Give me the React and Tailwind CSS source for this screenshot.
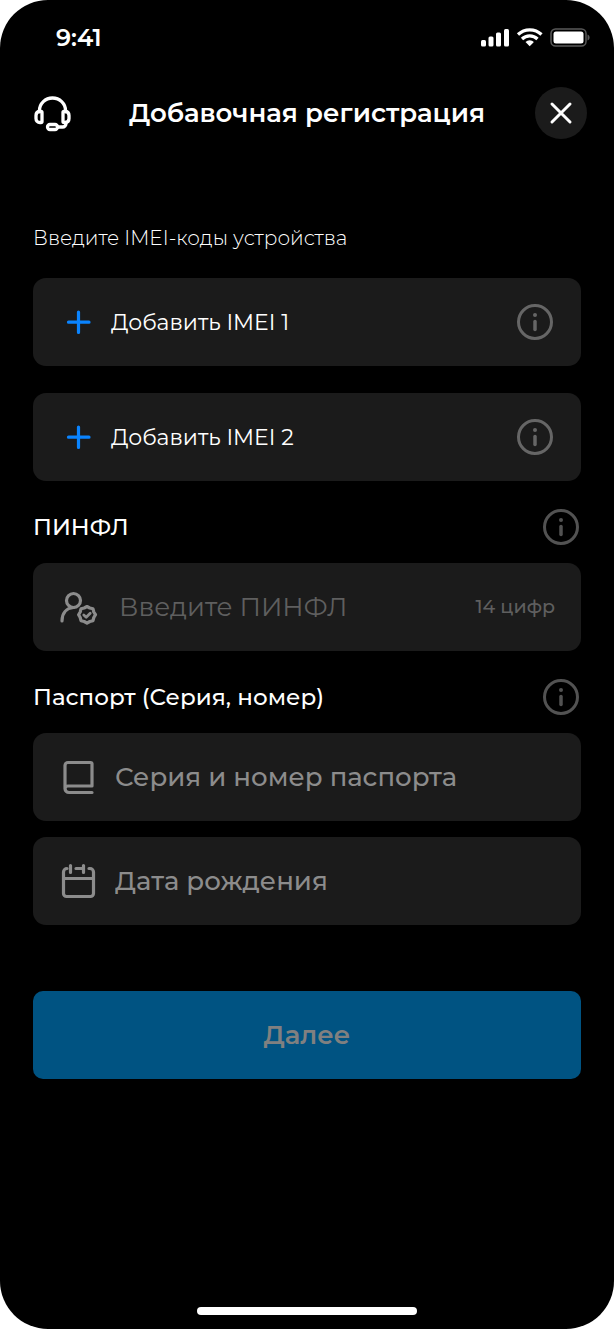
import React, { useState } from 'react';

const HeadsetIcon = () => (
  <svg viewBox="0 0 40 40" className="size-10" fill="none" stroke="currentColor" strokeWidth="3.3" strokeLinecap="round" strokeLinejoin="round">
    <path d="M6.500 18.500V17.500a13 12.500 0 0 1 26 0v1" />
    <path d="M7 18.500h1a1 1 0 0 1 1 1v9a1 1 0 0 1-1 1h-1c-2.500 0-4-1.500-4-4v-3c0-2.500 1.500-4 4-4Z" />
    <path d="M32 18.500h-1a1 1 0 0 0-1 1v9a1 1 0 0 0 1 1h1c2.500 0 4-1.500 4-4v-3c0-2.500-1.500-4-4-4Z" />
    <path d="M33 29.500v1a3.500 3.500 0 0 1-3.500 3.500h-5" />
    <rect x="14.500" y="31.500" width="10" height="5" rx="2.500" />
  </svg>
);

const CloseIcon = () => (
  <svg viewBox="0 0 24 24" className="size-6" fill="none" stroke="currentColor" strokeWidth="3" strokeLinecap="round">
    <path d="M3 3l18 18M21 3 3 21" />
  </svg>
);

const PlusIcon = () => (
  <svg viewBox="0 0 40 40" className="size-10 shrink-0 text-[#0a84ff]" fill="none" stroke="currentColor" strokeWidth="3.2" strokeLinecap="round">
    <path d="M19.500 10v20.500M9.500 20.200h20.500" />
  </svg>
);

const InfoIcon = () => (
  <svg viewBox="0 0 40 40" className="size-10" fill="none" stroke="currentColor" strokeWidth="3" strokeLinecap="round">
    <circle cx="20" cy="20" r="16.500" />
    <path d="M20 19.500v8" strokeWidth="3.500" />
    <circle cx="20" cy="13" r="2" fill="currentColor" stroke="none" />
  </svg>
);

const UserCheckIcon = () => (
  <svg viewBox="0 0 40 40" className="size-10 shrink-0 text-[#8c8c8c]" fill="none" stroke="currentColor" strokeWidth="3.2" strokeLinecap="round" strokeLinejoin="round">
    <circle cx="14.500" cy="13.500" r="7" />
    <path d="M3 34C3 26 7.500 21 14.500 20.500" />
    <path d="M28 19.500l2.800 1.500 3.200.8.800 3.200 1.700 2.700-1.700 2.800-.8 3.200-3.200.8-2.800 1.600-2.800-1.600-3.200-.8-.8-3.200-1.600-2.800 1.600-2.700.8-3.200 3.200-.8Z" />
    <path d="M24.800 28l2.400 2.200 4-4" strokeWidth="2.800" />
  </svg>
);

const BookIcon = () => (
  <svg viewBox="0 0 40 40" className="size-10 shrink-0 text-[#8c8c8c]" fill="none" stroke="currentColor" strokeWidth="3.2" strokeLinecap="round" strokeLinejoin="round">
    <path d="M33 35.500H10a4 4 0 0 1-4-4V8.500a3 3 0 0 1 3-3h22.500a1.500 1.500 0 0 1 1.500 1.500v22H9a3 3 0 0 0-3 3" />
  </svg>
);

const CalendarIcon = () => (
  <svg viewBox="0 0 40 40" className="size-10 shrink-0 text-[#8c8c8c]" fill="none" stroke="currentColor" strokeWidth="3.2" strokeLinecap="round" strokeLinejoin="round">
    <path d="M8 7.500A3.500 3.500 0 0 0 4.500 11v21.500a3 3 0 0 0 3 3h24a3 3 0 0 0 3-3V11a3.500 3.500 0 0 0-3.500-3.500h-1" />
    <path d="M4.500 17.500h30M17 7.500h7M11.500 4.500v7M24.500 4.500v7" />
  </svg>
);

const StatusIcons = () => (
  <svg viewBox="0 0 110 20" className="h-5 w-[110px]" fill="white">
    <rect x="1" y="12" width="5" height="6.500" rx="1.500" />
    <rect x="8.500" y="8.500" width="5" height="10" rx="1.500" />
    <rect x="16" y="4.500" width="5" height="14" rx="1.500" />
    <rect x="24" y="1" width="5" height="17.500" rx="1.500" />
    <g fill="none" stroke="white" strokeWidth="3.200">
      <path d="M38 6.500a17 17 0 0 1 23.500 0" />
      <path d="M42 11a11 11 0 0 1 15.500 0" />
    </g>
    <path d="M49.700 18.200l-4.200-4.200a6.200 6.200 0 0 1 8.400 0Z" />
    <rect x="71" y="1" width="35" height="17" rx="4.500" fill="none" stroke="#595959" strokeWidth="1.500" />
    <rect x="73.500" y="3.500" width="30" height="12" rx="2.500" />
    <path d="M107.500 6.500c2.800 1 2.800 5 0 6Z" fill="#595959" />
  </svg>
);

const boxClass = "flex h-[88px] items-center rounded-[13px] bg-[#1b1b1b] px-[26px]";

function ImeiRow({ number, onAdd }) {
  return (
    <div className={boxClass}>
      <button type="button" onClick={onAdd} className="flex flex-1 items-center gap-3 text-left text-[22px] text-white">
        <PlusIcon />
        Добавить IMEI {number}
      </button>
      <button type="button" aria-label={`Об IMEI ${number}`} className="text-[#666666]">
        <InfoIcon />
      </button>
    </div>
  );
}

function FieldLabel({ htmlFor, children }) {
  return (
    <div className="flex items-center justify-between">
      <label htmlFor={htmlFor} className="text-[23px] font-medium text-white">{children}</label>
      <button type="button" aria-label="Подробнее" className="text-[#525252]">
        <InfoIcon />
      </button>
    </div>
  );
}

function App() {
  const [form, setForm] = useState({ pinfl: '', passport: '', birthday: '' });

  const handleChange = (e) => {
    setForm({ ...form, [e.target.name]: e.target.value });
  };

  return (
    <div className="min-h-screen bg-white font-['Montserrat','Inter',sans-serif]">
      <div className="flex min-h-screen flex-col rounded-[48px] bg-black">
        <div className="flex h-[76px] items-center justify-between pr-6 pl-14">
          <span className="text-[24px] font-semibold text-white">9:41</span>
          <StatusIcons />
        </div>

        <header className="grid h-[74px] grid-cols-[52px_1fr_52px] items-center px-[27px]">
          <button type="button" aria-label="Поддержка" className="flex justify-center text-white">
            <HeadsetIcon />
          </button>
          <h1 className="text-center text-[26px] font-semibold text-white">Добавочная регистрация</h1>
          <button type="button" aria-label="Закрыть" className="flex size-[52px] items-center justify-center rounded-full bg-[#1b1b1b] text-white">
            <CloseIcon />
          </button>
        </header>

        <form onSubmit={(e) => e.preventDefault()} className="flex flex-col px-[33px] pt-[74px]">
          <p className="text-[20px] leading-7 font-light text-white">Введите IMEI-коды устройства</p>

          <div className="mt-[26px] flex flex-col gap-[27px]">
            <ImeiRow number={1} />
            <ImeiRow number={2} />
          </div>

          <div className="mt-[26px] flex flex-col gap-4">
            <FieldLabel htmlFor="pinfl">ПИНФЛ</FieldLabel>
            <div className={boxClass}>
              <UserCheckIcon />
              <input
                id="pinfl"
                name="pinfl"
                value={form.pinfl}
                onChange={handleChange}
                maxLength={14}
                placeholder="Введите ПИНФЛ"
                className="ml-5 min-w-0 flex-1 bg-transparent text-[26px] text-white outline-none placeholder:text-[#5f5f5f]"
              />
              <span className="text-[19px] font-medium text-[#5f5f5f]">14 цифр</span>
            </div>
          </div>

          <div className="mt-[26px] flex flex-col gap-4">
            <FieldLabel htmlFor="passport">Паспорт (Серия, номер)</FieldLabel>
            <div className={boxClass}>
              <BookIcon />
              <input
                id="passport"
                name="passport"
                value={form.passport}
                onChange={handleChange}
                placeholder="Серия и номер паспорта"
                className="ml-4 min-w-0 flex-1 bg-transparent text-[26px] font-medium text-white outline-none placeholder:text-[#8c8c8c]"
              />
            </div>
            <div className={boxClass}>
              <CalendarIcon />
              <input
                name="birthday"
                aria-label="Дата рождения"
                value={form.birthday}
                onChange={handleChange}
                placeholder="Дата рождения"
                className="ml-4 min-w-0 flex-1 bg-transparent text-[26px] font-medium text-white outline-none placeholder:text-[#8c8c8c]"
              />
            </div>
          </div>

          <button type="submit" className="mt-[66px] h-[88px] rounded-[10px] bg-[#005382] text-[26px] font-semibold text-[#808080]">
            Далее
          </button>
        </form>

        <div className="mx-auto mt-auto mb-[14px] h-2 w-[220px] rounded-full bg-white" />
      </div>
    </div>
  );
}

export default App;
